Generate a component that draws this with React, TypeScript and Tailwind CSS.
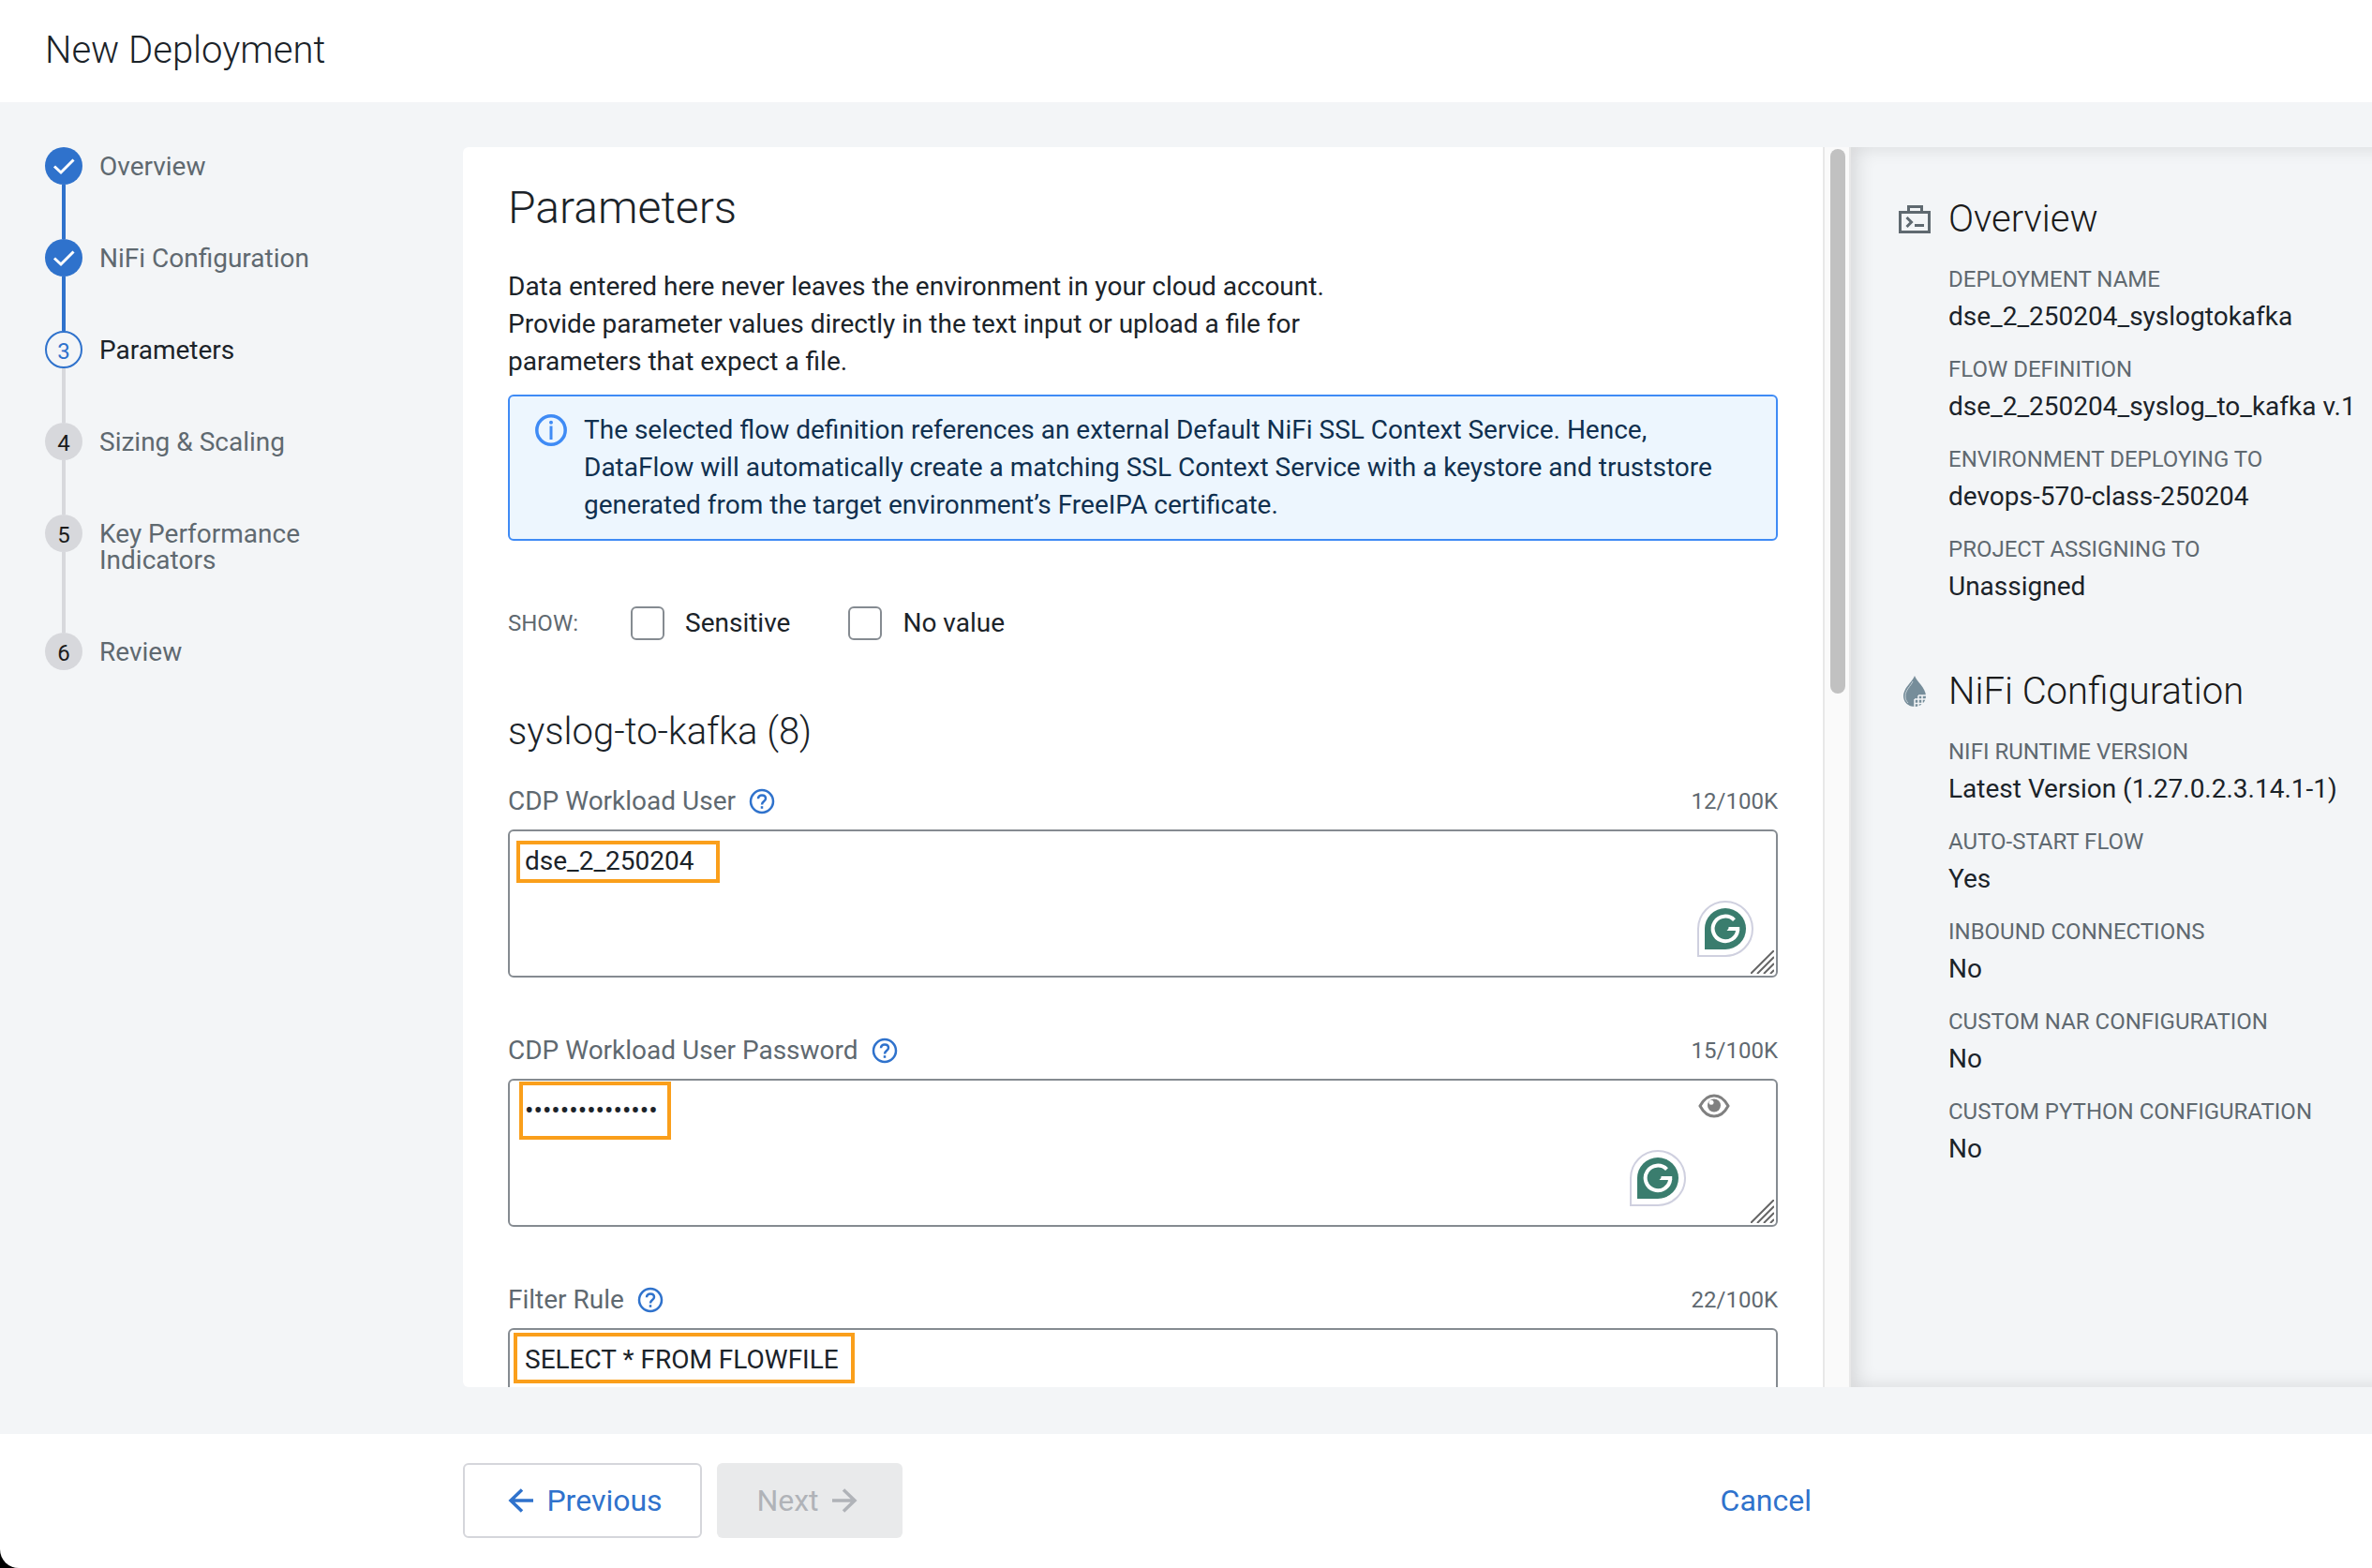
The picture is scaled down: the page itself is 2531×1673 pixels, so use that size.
import React from "react";

type Step = { label: string; state: "done" | "current" | "todo" };

const steps: Step[] = [
  { label: "Overview", state: "done" },
  { label: "NiFi Configuration", state: "done" },
  { label: "Parameters", state: "current" },
  { label: "Sizing & Scaling", state: "todo" },
  { label: "Key Performance Indicators", state: "todo" },
  { label: "Review", state: "todo" },
];

const overview = [
  ["Deployment Name", "dse_2_250204_syslogtokafka"],
  ["Flow Definition", "dse_2_250204_syslog_to_kafka v.1"],
  ["Environment Deploying To", "devops-570-class-250204"],
  ["Project Assigning To", "Unassigned"],
];

const nifi = [
  ["NiFi Runtime Version", "Latest Version (1.27.0.2.3.14.1-1)"],
  ["Auto-Start Flow", "Yes"],
  ["Inbound Connections", "No"],
  ["Custom NAR Configuration", "No"],
  ["Custom Python Configuration", "No"],
];

const bubble: Record<Step["state"], string> = {
  done: "bg-[#2f72cc] text-white",
  current: "border-2 border-[#2f72cc] text-[#2f72cc]",
  todo: "bg-[#d7d8dc] text-[#1b1b1b]",
};

function Stepper() {
  return (
    <ol className="w-[494px] shrink-0 pl-12">
      {steps.map((step, i) => (
        <li key={step.label} className="flex gap-[18px]">
          <div className="flex w-10 shrink-0 flex-col items-center">
            <span className={`flex size-10 shrink-0 items-center justify-center rounded-full text-2xl leading-6 ${bubble[step.state]}`}>
              {step.state === "done" ? (
                <svg width="24" height="20" viewBox="0 0 24 20" fill="none" stroke="currentColor" strokeWidth="3">
                  <path d="M2 10.5 9 17 22.500 3.500" />
                </svg>
              ) : (
                <span className="pt-1">{i + 1}</span>
              )}
            </span>
            {i < steps.length - 1 && (
              <span className={`w-1 grow ${step.state === "done" ? "bg-[#2f72cc]" : "bg-[#d7d8dc]"}`} />
            )}
          </div>
          <span
            className={`max-w-[260px] pt-[7px] pb-[63px] text-[28px] leading-7 ${step.state === "current" ? "text-[#1b2329]" : "text-[#5f6970]"}`}
            aria-current={step.state === "current" ? "step" : undefined}
          >
            {step.label}
          </span>
        </li>
      ))}
    </ol>
  );
}

function HelpIcon() {
  return (
    <svg width="28" height="28" viewBox="0 0 28 28" fill="none" stroke="currentColor" strokeWidth="2.500">
      <circle cx="14" cy="14" r="12" />
      <path d="M10 11.300C10 8.900 11.700 7.600 14 7.600s4 1.300 4 3.500c0 3-4 3-4 6.300" />
      <path d="M14 19.200v2.600" />
    </svg>
  );
}

function InfoIcon() {
  return (
    <svg width="34" height="34" viewBox="0 0 34 34" fill="none" stroke="currentColor" strokeWidth="3.500" className="mt-[3px] shrink-0 text-[#3f8bf5]">
      <circle cx="17" cy="17" r="15.200" />
      <path d="M17 12.500v14.500" strokeWidth="3" />
      <circle cx="17" cy="8.800" r="2" fill="currentColor" stroke="none" />
    </svg>
  );
}

function AssistantBadge({ className }: { className: string }) {
  return (
    <span className={`absolute flex size-[60px] items-center justify-center rounded-full rounded-bl-none border-2 border-[#cfd0df] bg-white ${className}`}>
      <span className="flex size-11 items-center justify-center rounded-full rounded-bl-none bg-[#3a7d6e]">
        <svg width="34" height="34" viewBox="0 0 34 34" fill="none" stroke="#fff" strokeWidth="4">
          <path d="M26.500 7.600A13.300 13.300 0 1 0 30.200 18.200" />
          <path d="M32.200 17H20.500" />
          <path d="M18.500 19 22 15h6v4z" fill="#fff" stroke="none" />
        </svg>
      </span>
    </span>
  );
}

function ResizeGrip() {
  return (
    <svg className="pointer-events-none absolute right-1 bottom-1" width="25" height="25" viewBox="0 0 25 25" stroke="#666" strokeWidth="2">
      <path d="M0 25 25 0M7 25 25 7M14 25 25 14M21 25 25 21" />
    </svg>
  );
}

function EyeIcon() {
  return (
    <svg width="34" height="26" viewBox="0 0 34 26" fill="none">
      <path d="M2 13C6 5.500 11 2 17 2s11 3.500 15 11c-4 7.500-9 11-15 11S6 20.500 2 13Z" stroke="#808080" strokeWidth="3" />
      <circle cx="17" cy="12.500" r="7" fill="#808080" />
      <circle cx="14" cy="9.200" r="2.500" fill="#fff" />
    </svg>
  );
}

type FieldProps = {
  id: string;
  label: string;
  count: string;
  value: string;
  textClass?: string;
  highlight: string;
  children?: React.ReactNode;
};

function Field({ id, label, count, value, textClass = "", highlight, children }: FieldProps) {
  return (
    <div className="pb-[58px]">
      <div className="flex h-10 items-center text-[#5f6970]">
        <label htmlFor={id} className="text-[28px] leading-10">{label}</label>
        <button type="button" aria-label={`About ${label}`} className="ml-3.5 text-[#2f72cc]">
          <HelpIcon />
        </button>
        <span className="ml-auto text-2xl leading-10">{count}</span>
      </div>
      <div className="relative mt-2.5">
        <textarea
          id={id}
          defaultValue={value}
          spellCheck={false}
          className={`block h-[158px] w-full resize-none rounded-md border-2 border-[#858b91] bg-white px-4 py-3 text-[28px] leading-10 text-[#1b2329] outline-none ${textClass}`}
        />
        <span className={`pointer-events-none absolute border-4 border-[#fa9f1b] ${highlight}`} />
        {children}
        <ResizeGrip />
      </div>
    </div>
  );
}

function Summary({ icon, title, items }: { icon: React.ReactNode; title: string; items: string[][] }) {
  return (
    <section>
      <div className="flex items-center gap-[18px]">
        <span className="flex w-9 shrink-0 justify-center">{icon}</span>
        <h2 className="text-[40px] leading-12 font-light text-[#1b1b1b]">{title}</h2>
      </div>
      <dl className="mt-5 flex flex-col gap-4 pl-[54px]">
        {items.map(([name, value]) => (
          <div key={name}>
            <dt className="text-2xl leading-10 text-[#5f6970] uppercase">{name}</dt>
            <dd className="text-[28px] leading-10 whitespace-nowrap text-[#1b2329]">{value}</dd>
          </div>
        ))}
      </dl>
    </section>
  );
}

function ToolboxIcon() {
  return (
    <svg width="34" height="30" viewBox="0 0 34 30" fill="none" stroke="#5f6970" strokeWidth="3">
      <path d="M1.500 7.500h31v21h-31zM10.500 7V1.500h14V7" />
      <path d="m8.500 13 5 5-5 5M17 21.500h10" />
    </svg>
  );
}

function DropIcon() {
  return (
    <svg width="24" height="34" viewBox="0 0 24 34">
      <path d="M12 0C14 6 24 13 24 21.500 24 28 19 33 12 33S0 28 0 21.500C0 13 10 6 12 0Z" fill="#768d9a" />
      <path d="M10 6C8 11 2 15 2 22c0 3 1 5 3 7" fill="none" stroke="#c5d0d7" strokeWidth="1" />
      <path d="M12 25h12M16 21h8M12 29.500h10M12 25v8M16 21v12M20 21v12" stroke="#f3f5f7" strokeWidth="1.500" />
    </svg>
  );
}

function Check({ label }: { label: string }) {
  return (
    <label className="flex items-center gap-[22px] text-[28px] leading-10 text-[#1b2329]">
      <input type="checkbox" className="size-9 appearance-none rounded-md border-2 border-[#858b91] bg-white" />
      {label}
    </label>
  );
}

export default function App() {
  return (
    <div className="h-screen bg-black font-[Roboto,sans-serif]">
      <div className="flex h-full flex-col overflow-hidden rounded-bl-[20px] bg-white">
        <header className="px-12 pt-[30px] pb-[31px]">
          <h1 className="text-[40px] leading-12 font-light text-[#1b2329]">New Deployment</h1>
        </header>

        <main className="flex min-h-0 grow overflow-hidden bg-[#f3f5f7] pt-12 pb-[50px]">
          <Stepper />

          <div className="flex min-w-0 grow overflow-hidden rounded-l-md bg-white">
            <div className="min-w-0 grow overflow-hidden px-12 pt-[35px]">
              <h2 className="text-5xl leading-[60px] font-light text-[#1b2329]">Parameters</h2>
              <p className="mt-[34px] max-w-[900px] text-[28px] leading-10 text-[#1b2329]">
                Data entered here never leaves the environment in your cloud account. Provide parameter values directly in the text input or upload a file for parameters that expect a file.
              </p>
              <div role="note" className="mt-[15px] flex gap-[18px] rounded-md border-2 border-[#3f8bf5] bg-[#edf6fe] py-4 pr-12 pl-[27px] text-[28px] leading-10 text-[#10304f]">
                <InfoIcon />
                <p>
                  The selected flow definition references an external Default NiFi SSL Context Service. Hence, DataFlow will automatically create a matching SSL Context Service with a keystore and truststore generated from the target environment’s FreeIPA certificate.
                </p>
              </div>

              <div className="mt-[68px] flex items-center">
                <span className="w-[131px] text-2xl leading-10 text-[#5f6970]">SHOW:</span>
                <div className="flex gap-[62px]">
                  <Check label="Sensitive" />
                  <Check label="No value" />
                </div>
              </div>

              <h3 className="mt-[72px] mb-[30px] text-[40px] leading-12 font-light text-[#1b2329]">syslog-to-kafka (8)</h3>

              <Field id="user" label="CDP Workload User" count="12/100K" value="dse_2_250204" highlight="top-3 left-[9px] h-[45px] w-[217px]">
                <AssistantBadge className="right-[26px] bottom-[22px]" />
              </Field>
              <Field
                id="password"
                label="CDP Workload User Password"
                count="15/100K"
                value="workloadpass123"
                textClass="[-webkit-text-security:disc]"
                highlight="top-[3px] left-3 h-[62px] w-[162px]"
              >
                <button type="button" aria-label="Show value" className="absolute top-4 right-[51px]">
                  <EyeIcon />
                </button>
                <AssistantBadge className="right-[98px] bottom-[22px]" />
              </Field>
              <Field id="filter" label="Filter Rule" count="22/100K" value="SELECT * FROM FLOWFILE" highlight="top-[5px] left-1.5 h-[54px] w-[364px]" />
            </div>

            <div className="w-[30px] shrink-0 border-x-2 border-[#e8e8e8] bg-[#fafafa] px-1.5 pt-0.5">
              <div className="h-[44%] w-4 rounded-full bg-[#c1c1c1]" />
            </div>
          </div>

          <aside className="-mr-10 flex w-[596px] shrink-0 flex-col gap-[68px] overflow-hidden pt-[53px] pl-[50px] shadow-[inset_6px_0_20px_rgba(0,0,0,0.12)]">
            <Summary icon={<ToolboxIcon />} title="Overview" items={overview} />
            <Summary icon={<DropIcon />} title="NiFi Configuration" items={nifi} />
          </aside>
        </main>

        <footer className="flex items-center gap-4 pt-[31px] pr-[598px] pb-8 pl-[494px] text-[32px] leading-10">
          <button type="button" className="flex h-20 w-[255px] items-center justify-center gap-3.5 rounded-md border-2 border-[#d5d6db] pl-1.5 text-[#2f72cc]">
            <svg width="27" height="26" viewBox="0 0 27 26" fill="none" stroke="currentColor" strokeWidth="3.500">
              <path d="M27 13H3M15 1.500 3 13l12 11.500" />
            </svg>
            Previous
          </button>
          <button type="button" disabled className="flex h-20 w-[198px] items-center justify-center gap-3.5 rounded-md bg-[#e9eaeb] pr-1.5 text-[#b0b3b8]">
            Next
            <svg width="27" height="26" viewBox="0 0 27 26" fill="none" stroke="currentColor" strokeWidth="3.500">
              <path d="M0 13h24M12 1.500 24 13 12 24.500" />
            </svg>
          </button>
          <button type="button" className="ml-auto text-[#2f72cc]">Cancel</button>
        </footer>
      </div>
    </div>
  );
}
